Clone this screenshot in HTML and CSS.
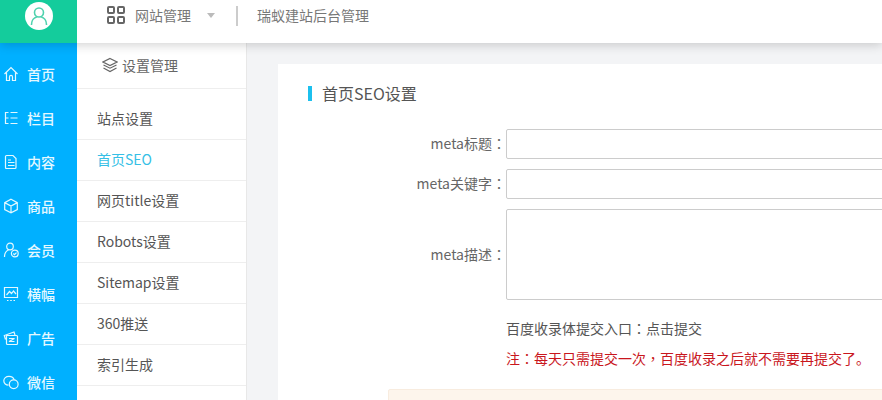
FILE: index.html
```html
<!DOCTYPE html>
<html lang="zh-CN">
<head>
  <meta charset="UTF-8" />
  <meta name="viewport" content="width=device-width, initial-scale=1.0"/>
  <title>首页SEO设置</title>
  <link rel="stylesheet" href="styles.css">
</head>
<body>

  <header class="topbar">
    <div class="logo">
      <div class="avatar">
        <svg width="18" height="18" viewBox="0 0 18 18" fill="none" stroke="#4fd2ae" stroke-width="1.600">
          <circle cx="9" cy="5.500" r="4.500"/>
          <path d="M1.500 17.500c0-4.500 3-7 5-7.600M16.500 17.500c0-4.500-3-7-5-7.600" stroke-linecap="round"/>
        </svg>
      </div>
    </div>
    <div class="site-menu">
      <svg class="grid-icon" width="18" height="18" viewBox="0 0 18 18" fill="none" stroke="#666" stroke-width="2">
        <rect x="1" y="1" width="6" height="6" rx="1"/>
        <rect x="11" y="1" width="6" height="6" rx="1"/>
        <rect x="1" y="11" width="6" height="6" rx="1"/>
        <rect x="11" y="11" width="6" height="6" rx="1"/>
      </svg>
      <span>网站管理</span>
      <i class="caret"></i>
      <i class="divider"></i>
      <span>瑞蚁建站后台管理</span>
    </div>
  </header>

  <div class="layout">
    <nav class="sidebar">
      <a href="#">
        <svg width="16" height="16" viewBox="0 0 16 16"><path d="M1.500 8L8 1.500 14.500 8M3.500 6.500v8h3V11c0-1 .6-1.600 1.500-1.600S9.500 10 9.500 11v3.500h3v-8"/></svg>
        首页
      </a>
      <a href="#">
        <svg width="16" height="16" viewBox="0 0 16 16"><path d="M2.500 2v12M2.500 2.500h3M2.500 8h3M2.500 13.500h3M7.500 2.500h7M7.500 8h7M7.500 13.500h7"/></svg>
        栏目
      </a>
      <a href="#">
        <svg width="16" height="16" viewBox="0 0 16 16"><path d="M3.500 1.500h6.500l3 3v9c0 .6-.4 1-1 1h-8.500c-.6 0-1-.4-1-1v-11c0-.6.4-1 1-1zM5 6h3M5 8.500h6.500M5 11.500h6.500"/></svg>
        内容
      </a>
      <a href="#">
        <svg width="16" height="16" viewBox="0 0 16 16"><path d="M8 1.200l6.300 3.400v7L8 14.800l-6.300-3.200v-7zM1.700 4.600L8 8l6.300-3.400M8 8v6.800"/></svg>
        商品
      </a>
      <a href="#">
        <svg width="16" height="16" viewBox="0 0 16 16"><circle cx="7" cy="4.500" r="3.300"/><path d="M1.500 15c0-3.500 1.500-6 4-7"/><circle cx="11.800" cy="11.500" r="3.400"/><path d="M10.300 11.500l1.200 1.200 2-2"/></svg>
        会员
      </a>
      <a href="#">
        <svg width="16" height="16" viewBox="0 0 16 16"><path d="M1.500 1.500h13v10h-13zM3.500 9l3-3.500 2 2 2-2.500 2.500 3M4 14.500h1.500M7.200 14.500h1.600M10.500 14.500H12"/></svg>
        横幅
      </a>
      <a href="#">
        <svg width="16" height="16" viewBox="0 0 16 16"><path d="M2.500 9.500L1.300 5.500 11 2l1 3M3.500 5.500h10c.6 0 1 .4 1 1v7c0 .6-.4 1-1 1h-9c-.6 0-1-.4-1-1zM6 8.500h5.500L6 11.500h5.500"/></svg>
        广告
      </a>
      <a href="#">
        <svg width="16" height="16" viewBox="0 0 16 16"><path d="M5.500 11.200C3 11.200.8 9.300.8 6.800S3 2.300 6 2.300c2.500 0 4.600 1.400 5.200 3.500"/><circle cx="10.700" cy="10.300" r="4.400"/><path d="M9 9.300h.1M12.400 9.300h.1M4.200 5.500h.1"/></svg>
        微信
      </a>
    </nav>

    <aside class="submenu">
      <div class="submenu-head">
        <svg width="16" height="16" viewBox="0 0 16 16" fill="none" stroke="#666" stroke-width="1.200">
          <path d="M8 1.500L15 5l-7 3.500L1 5zM1.500 8L8 11.200 14.500 8M1.500 11L8 14.500 14.500 11"/>
        </svg>
        设置管理
      </div>
      <ul class="submenu-list">
        <li>站点设置</li>
        <li class="active">首页SEO</li>
        <li>网页title设置</li>
        <li>Robots设置</li>
        <li>Sitemap设置</li>
        <li>360推送</li>
        <li>索引生成</li>
      </ul>
    </aside>

    <main class="content">
      <section class="card">
        <h2 class="card-title">首页SEO设置</h2>
        <form class="seo-form">
          <label for="metaTitle">meta标题<span class="mark" lang="zh-TW">：</span></label>
          <input type="text" id="metaTitle" />

          <label for="metaKeys">meta关键字<span class="mark" lang="zh-TW">：</span></label>
          <input type="text" id="metaKeys" />

          <label for="metaDesc">meta描述<span class="mark" lang="zh-TW">：</span></label>
          <textarea id="metaDesc"></textarea>

          <p class="submit-link">百度收录体提交入口<span class="mark" lang="zh-TW">：</span>点击提交</p>
          <p class="notice">注<span class="mark" lang="zh-TW">：</span>每天只需提交一次<span class="mark" lang="zh-TW">，</span>百度收录之后就不需要再提交了。</p>
        </form>
        <div class="tip-box"></div>
      </section>
    </main>
  </div>

</body>
</html>
```

FILE: styles.css
```css
html, body {
  height: 400px;
  overflow: hidden;
}

body {
  font-family: "Noto Sans CJK SC", "Open Sans", sans-serif;
  font-size: 14px;
  margin: 0;
  padding: 0;
  background: #f3f4f6;
  color: #555;
}

.topbar {
  display: flex;
  height: 43px;
  background: white;
  box-shadow: 0 2px 10px rgba(0,0,0,0.18);
  position: relative;
  z-index: 2;
}

.logo {
  width: 77px;
  background: #14cc9c;
  display: flex;
  justify-content: center;
  padding-top: 2px;
  box-sizing: border-box;
  flex: none;
}

.avatar {
  width: 28px;
  height: 28px;
  border-radius: 50%;
  background: white;
  display: flex;
  justify-content: center;
  align-items: center;
}

.site-menu {
  display: flex;
  align-items: center;
  padding-left: 30px;
  color: #777;
  height: 30px;
}

.grid-icon {
  margin-right: 10px;
}

.caret {
  width: 0;
  height: 0;
  border-left: 4px solid transparent;
  border-right: 4px solid transparent;
  border-top: 5px solid #bbb;
  margin: 0 21px 0 16px;
}

.divider {
  width: 2px;
  height: 20px;
  background: #ccc;
  margin: 2px 19px 0 0;
}

.layout {
  display: flex;
  height: 357px;
  overflow: hidden;
}

.sidebar {
  width: 77px;
  flex: none;
  background: #00b0ff;
  padding-top: 9px;
}

.sidebar a {
  display: flex;
  align-items: center;
  height: 44px;
  padding-left: 3px;
  color: #e4f8ff;
  font-weight: 500;
  text-decoration: none;
}

.sidebar svg {
  margin-right: 8px;
  fill: none;
  stroke: #e4f8ff;
  stroke-width: 1.200;
}

.submenu {
  width: 169px;
  flex: none;
  background: white;
  border-right: 1px solid #e8e8e8;
}

.submenu-head {
  display: flex;
  align-items: center;
  box-sizing: border-box;
  height: 46px;
  padding: 0 0 2px 25px;
  border-bottom: 1px solid #eee;
  color: #666;
}

.submenu-head svg {
  margin-right: 4px;
}

.submenu-list {
  list-style: none;
  margin: 0;
  padding: 10px 0 0;
}

.submenu-list li {
  height: 40px;
  line-height: 38px;
  padding-left: 20px;
  border-bottom: 1px solid #eee;
  color: #555;
}

.submenu-list .active {
  color: #35bfe6;
}

.content {
  flex: none;
  padding: 21px 0 0 31px;
}

.card {
  box-sizing: border-box;
  width: 604px;
  height: 336px;
  background: white;
  padding-top: 22px;
  overflow: hidden;
}

.card-title {
  margin: 0 0 28px 30px;
  padding-left: 10px;
  border-left: 4px solid #1cc0ee;
  font-size: 16px;
  font-weight: 400;
  line-height: 15px;
  color: #555;
}

.seo-form {
  display: grid;
  grid-template-columns: 228px 400px;
  row-gap: 10px;
  align-items: center;
}

.seo-form label {
  text-align: right;
  color: #666;
  padding-bottom: 2px;
}

/* centred colon and comma, as in the traditional cut */
.mark {
  font-family: "Noto Sans CJK TC", sans-serif;
}

input, textarea {
  display: block;
  box-sizing: border-box;
  width: 100%;
  height: 30px;
  margin: 0;
  border: 1px solid #ccc;
  border-radius: 2px;
  background: white;
}

textarea {
  height: 91px;
  resize: none;
}

.submit-link, .notice {
  grid-column: 2;
  margin: 0;
  line-height: 20px;
}

.submit-link {
  margin-top: 8px;
}

.notice {
  color: #c9161d;
}

.tip-box {
  margin: 21px 0 0 110px;
  height: 60px;
  width: 600px;
  background: #fdf5ec;
  border: 1px solid #f8ecdf;
  border-radius: 2px;
}
```
